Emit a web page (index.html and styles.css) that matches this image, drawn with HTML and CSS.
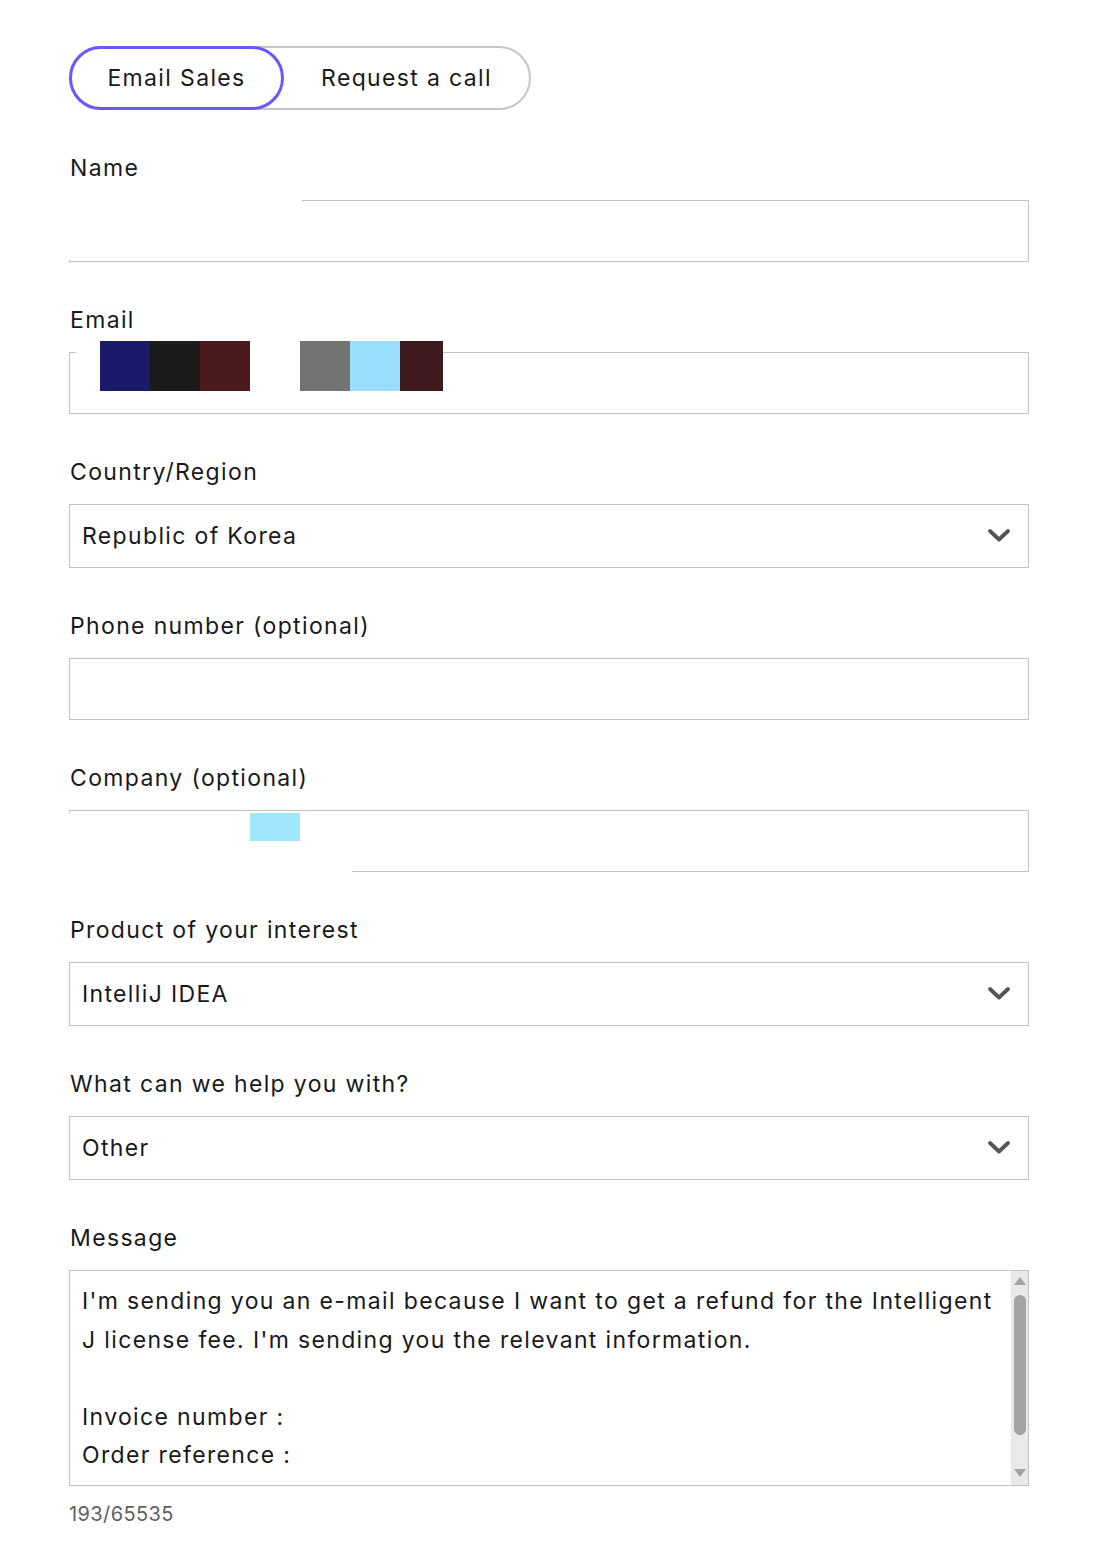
FILE: index.html
```html
<!DOCTYPE html>
<html lang="en">
<head>
<meta charset="utf-8">
<title>Contact Sales</title>
<link rel="stylesheet" href="styles.css">
</head>
<body>
<form class="form">
  <div class="tabs">
    <button type="button" class="tab tab-active">Email Sales</button>
    <button type="button" class="tab">Request a call</button>
  </div>

  <div class="field">
    <label class="label" for="name">Name</label>
    <div class="control">
      <input class="input" id="name" type="text">
      <div class="mask mask-name"></div>
    </div>
  </div>

  <div class="field">
    <label class="label" for="email">Email</label>
    <div class="control">
      <input class="input" id="email" type="email">
      <div class="mask mask-email">
        <span class="blk c1"></span><span class="blk c2"></span><span class="blk c3"></span><span class="blk gap"></span><span class="blk c4"></span><span class="blk c5"></span><span class="blk c6"></span>
      </div>
    </div>
  </div>

  <div class="field">
    <label class="label" for="country">Country/Region</label>
    <div class="control">
      <select class="input select" id="country"><option>Republic of Korea</option></select>
      <svg class="chev" width="24" height="15" viewBox="0 0 24 15"><path d="M3 3 L12 11.5 L21 3" fill="none" stroke="#555" stroke-width="3.8" stroke-linecap="round" stroke-linejoin="round"/></svg>
    </div>
  </div>

  <div class="field">
    <label class="label" for="phone">Phone number (optional)</label>
    <div class="control">
      <input class="input" id="phone" type="tel">
    </div>
  </div>

  <div class="field">
    <label class="label" for="company">Company (optional)</label>
    <div class="control">
      <input class="input" id="company" type="text">
      <div class="mask mask-company"><span class="blk cyan"></span></div>
    </div>
  </div>

  <div class="field">
    <label class="label" for="product">Product of your interest</label>
    <div class="control">
      <select class="input select" id="product"><option>IntelliJ IDEA</option></select>
      <svg class="chev" width="24" height="15" viewBox="0 0 24 15"><path d="M3 3 L12 11.5 L21 3" fill="none" stroke="#555" stroke-width="3.8" stroke-linecap="round" stroke-linejoin="round"/></svg>
    </div>
  </div>

  <div class="field">
    <label class="label" for="help">What can we help you with?</label>
    <div class="control">
      <select class="input select" id="help"><option>Other</option></select>
      <svg class="chev" width="24" height="15" viewBox="0 0 24 15"><path d="M3 3 L12 11.5 L21 3" fill="none" stroke="#555" stroke-width="3.8" stroke-linecap="round" stroke-linejoin="round"/></svg>
    </div>
  </div>

  <div class="field">
    <label class="label" for="message">Message</label>
    <div class="textbox">
      <textarea class="textarea" id="message">I'm sending you an e-mail because I want to get a refund for the Intelligent J license fee. I'm sending you the relevant information.

Invoice number : 
Order reference : </textarea>
      <div class="scrollbar" aria-hidden="true">
        <span class="arrow arrow-up"></span>
        <span class="thumb"></span>
        <span class="arrow arrow-down"></span>
      </div>
    </div>
    <div class="counter">193/65535</div>
  </div>
</form>
</body>
</html>
```

FILE: styles.css
```css
* { box-sizing: border-box; }

body {
  margin: 0;
  background: #ffffff;
  color: #19191c;
  font-family: Inter, "Noto Sans", "Liberation Sans", sans-serif;
  font-size: 23px;
  letter-spacing: 1.35px;
}

.form {
  width: 1029px;
  padding: 46px 0 40px 69px;
}

.tabs {
  display: flex;
  width: 462px;
  height: 64px;
  border: 2px solid #c6c6c6;
  border-radius: 32px;
}

.tab {
  flex: 1;
  font: inherit;
  letter-spacing: inherit;
  color: #19191c;
  background: transparent;
  border: 0;
  padding: 0;
  cursor: pointer;
}

.tab-active {
  flex: 0 0 215px;
  margin: -2px 0 -2px -2px;
  border: 3px solid #6b57ff;
  border-radius: 32px;
}

.field {
  margin-top: 43px;
}

.label {
  display: block;
  line-height: 30px;
  margin: 0 0 17px 1px;
}

.control {
  position: relative;
}

.input {
  display: block;
  width: 100%;
  height: 62px;
  border: 1px solid #c2c2c2;
  border-radius: 0;
  background: #fff;
  padding: 0 12px;
  font: inherit;
  letter-spacing: inherit;
  color: #19191c;
  outline: none;
}

.select {
  height: 64px;
  appearance: none;
  -webkit-appearance: none;
}

.chev {
  position: absolute;
  right: 18px;
  top: 24px;
  pointer-events: none;
}

.textbox {
  display: flex;
  height: 216px;
  border: 1px solid #c2c2c2;
}

.textarea {
  flex: 1;
  min-width: 0;
  border: 0;
  border-radius: 0;
  padding: 11px 3px 0 12px;
  font: inherit;
  letter-spacing: inherit;
  line-height: 38.5px;
  color: #19191c;
  resize: none;
  overflow: hidden;
  outline: none;
}

.scrollbar {
  flex: 0 0 17px;
  display: flex;
  flex-direction: column;
  align-items: center;
  background: #e9e9e9;
  padding: 6px 0 8px;
}

.arrow {
  width: 0;
  height: 0;
  border-left: 6px solid transparent;
  border-right: 6px solid transparent;
}

.arrow-up {
  border-bottom: 8px solid #a3a3a3;
}

.arrow-down {
  margin-top: auto;
  border-top: 8px solid #a3a3a3;
}

.thumb {
  width: 12px;
  height: 140px;
  margin-top: 10px;
  border-radius: 6px;
  background: #a3a3a3;
}

.counter {
  margin-top: 16px;
  font-size: 20px;
  line-height: 24px;
  letter-spacing: 0.4px;
  color: #5f5f63;
}

/* redaction overlays present in the source capture */
.mask {
  position: absolute;
  background: #fff;
}

.mask-name {
  left: -1px;
  top: -1px;
  width: 234px;
  height: 61px;
}

.mask-email {
  left: 7px;
  top: -11px;
  width: 367px;
  height: 50px;
  display: flex;
  padding-left: 24px;
}

.mask-company {
  left: -1px;
  top: 3px;
  width: 284px;
  height: 61px;
  padding-left: 182px;
}

.blk {
  display: block;
  width: 50px;
  height: 50px;
  flex: none;
}

.c1 { background: #1a1a6b; }
.c2 { background: #1b1b1b; }
.c3 { background: #4a1a1d; }
.gap { background: #fff; }
.c4 { background: #717372; }
.c5 { background: #97dffd; }
.c6 { background: #3e1a1e; width: 43px; }

.cyan {
  background: #a0e6ff;
  height: 28px;
}
```
